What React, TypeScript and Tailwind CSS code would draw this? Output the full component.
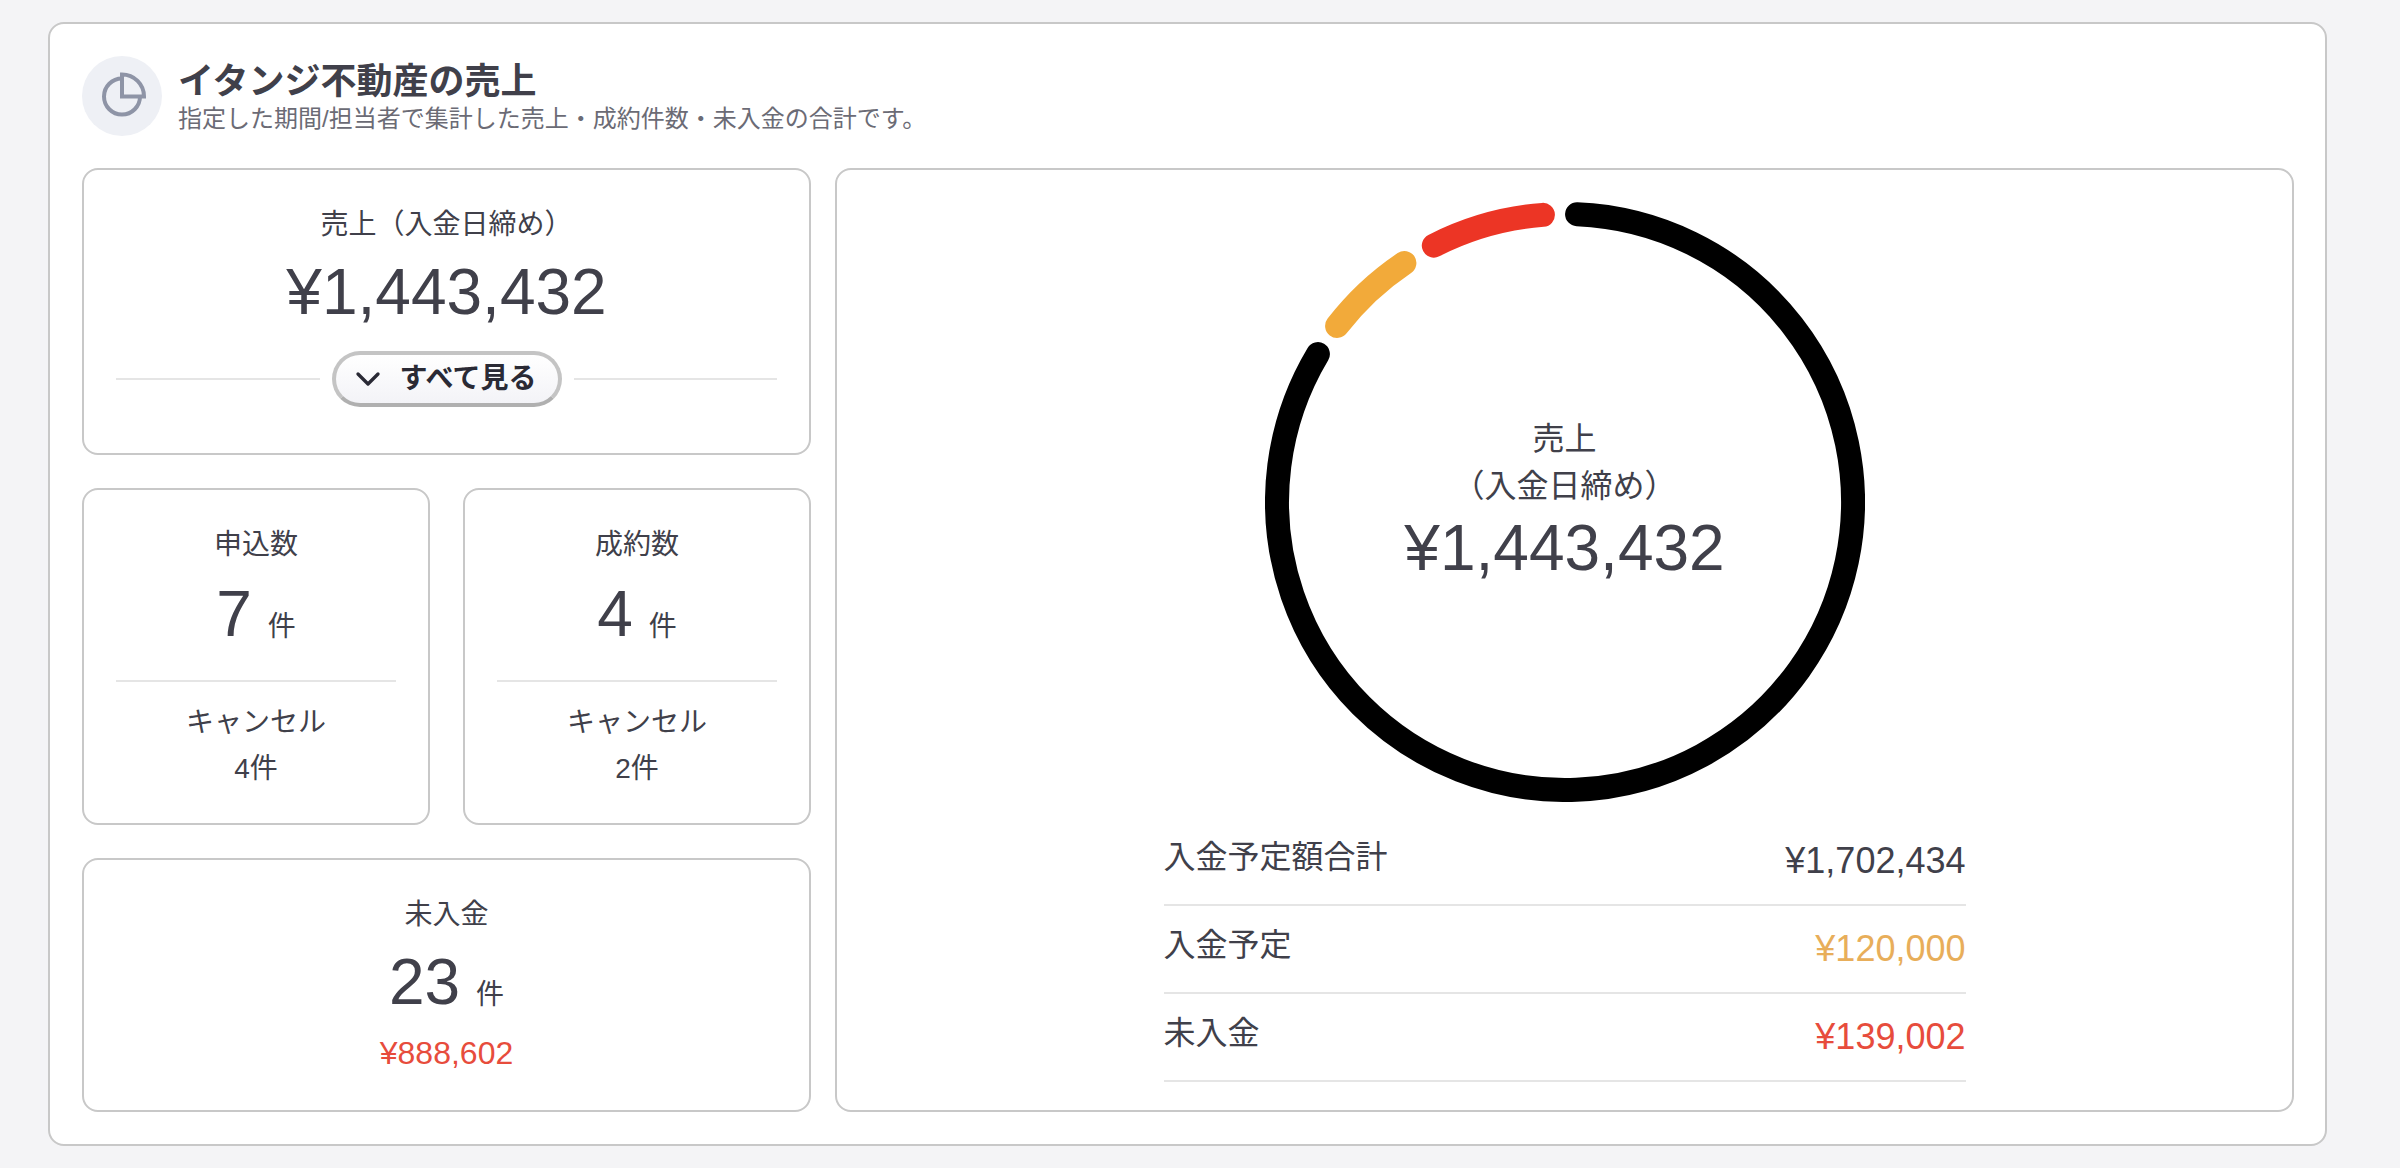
import { ChevronDown } from 'lucide-react';

function PieIcon() {
  return (
    <svg viewBox="0 0 80 80" className="w-20 h-20" fill="none" stroke="#8e94a6" strokeWidth="4">
      <path d="M40 22.5 A18 18 0 1 0 58 40.5" />
      <path d="M40 18.5 V40.5 H62 A22 22 0 0 0 40 18.5 Z" />
    </svg>
  );
}

function CountCard({ label, value, cancel }: { label: string; value: string; cancel: string }) {
  return (
    <div className="h-[337px] rounded-2xl border-2 border-[#c8c8c8] px-8 pt-[35px] text-center">
      <p className="text-[28px] leading-[40px]">{label}</p>
      <p className="mt-[13px] flex items-baseline justify-center gap-4 h-[72px]">
        <span className="text-[64px] leading-[72px]">{value}</span>
        <span className="text-[28px]">件</span>
      </p>
      <div className="mt-[30px] h-[2px] bg-[#e5e5e5]" />
      <p className="mt-[21px] text-[28px] leading-[40px]">キャンセル</p>
      <p className="mt-1.5 text-[28px] leading-[40px]">{cancel}</p>
    </div>
  );
}

function Row({ label, value, color }: { label: string; value: string; color: string }) {
  return (
    <div className="h-[88px] flex items-center justify-between border-b-2 border-[#e5e5e5]">
      <span className="text-[32px] leading-[40px] pb-2">{label}</span>
      <span className={`text-[36px] leading-[44px] ${color}`}>{value}</span>
    </div>
  );
}

export default function App() {
  return (
    <div className="min-h-screen bg-[#f4f4f6] pt-[22px] pl-[48px] text-[#40404a] font-['Liberation_Sans','Noto_Sans_CJK_JP',sans-serif]">
      <div className="w-[2279px] h-[1124px] bg-white rounded-2xl border-2 border-[#c8c8c8] p-8">
        {/* Header */}
        <div className="flex items-center gap-4 h-20">
          <div className="w-20 h-20 rounded-full bg-[#eef0f5] flex items-center justify-center">
            <PieIcon />
          </div>
          <div className="flex flex-col pt-[2px]">
            <h1 className="text-[36px] leading-[44px] font-bold">イタンジ不動産の売上</h1>
            <p className="text-[24px] leading-[30px] text-[#6b6b75]">
              指定した期間/担当者で集計した売上・成約件数・未入金の合計です。
            </p>
          </div>
        </div>

        <div className="mt-8 grid grid-cols-[729px_1459px] gap-x-6">
          {/* Left column */}
          <div className="flex flex-col gap-[33px]">
            <div className="h-[287px] rounded-2xl border-2 border-[#c8c8c8] px-8 pt-[35px] text-center">
              <p className="text-[28px] leading-[40px]">売上（入金日締め）</p>
              <p className="mt-[11px] text-[64px] leading-[72px]">¥1,443,432</p>
              <div className="mt-[23px] flex items-center gap-3">
                <div className="flex-1 h-[2px] bg-[#e5e5e5]" />
                <button className="w-[230px] h-[56px] flex items-center pl-3 rounded-full border-4 border-[#c4c4c4] border-b-[#b0b0b0] bg-gradient-to-b from-white to-[#f3f3f7] text-[#2a2a35] text-[28px] font-bold">
                  <ChevronDown className="w-10 h-10" />
                  <span className="ml-3">すべて見る</span>
                </button>
                <div className="flex-1 h-[2px] bg-[#e5e5e5]" />
              </div>
            </div>

            <div className="grid grid-cols-2 gap-x-[33px]">
              <CountCard label="申込数" value="7" cancel="4件" />
              <CountCard label="成約数" value="4" cancel="2件" />
            </div>

            <div className="h-[254px] rounded-2xl border-2 border-[#c8c8c8] pt-[35px] text-center">
              <p className="text-[28px] leading-[40px]">未入金</p>
              <p className="mt-[11px] flex items-baseline justify-center gap-4 h-[72px]">
                <span className="text-[64px] leading-[72px]">23</span>
                <span className="text-[28px]">件</span>
              </p>
              <p className="mt-[15px] text-[32px] leading-[40px] text-[#e74c3c]">¥888,602</p>
            </div>
          </div>

          {/* Right column */}
          <div className="h-[944px] rounded-2xl border-2 border-[#c8c8c8] pt-8">
            <div className="relative w-[600px] h-[600px] mx-auto">
              <svg viewBox="0 0 600 600" className="w-full h-full" fill="none" strokeWidth="24" strokeLinecap="round">
                <path d="M312.06 12.25 A288 288 0 1 1 52.9 152.1" stroke="#000000" />
                <path d="M72.1 123.9 A288 288 0 0 1 139.4 61" stroke="#f2aa3a" />
                <path d="M168.8 43.6 A288 288 0 0 1 277.9 12.85" stroke="#ec3525" />
              </svg>
              <div className="absolute inset-0 flex flex-col items-center justify-center pb-[3px] text-center">
                <p className="mb-[3px] text-[32px] leading-[44px]">売上</p>
                <p className="text-[32px] leading-[44px]">（入金日締め）</p>
                <p className="mt-1 text-[64px] leading-[72px]">¥1,443,432</p>
              </div>
            </div>
            <div className="mt-4 w-[802px] mx-auto">
              <Row label="入金予定額合計" value="¥1,702,434" color="text-[#40404a]" />
              <Row label="入金予定" value="¥120,000" color="text-[#e8ae5a]" />
              <Row label="未入金" value="¥139,002" color="text-[#e74c3c]" />
            </div>
          </div>
        </div>
      </div>
    </div>
  );
}
